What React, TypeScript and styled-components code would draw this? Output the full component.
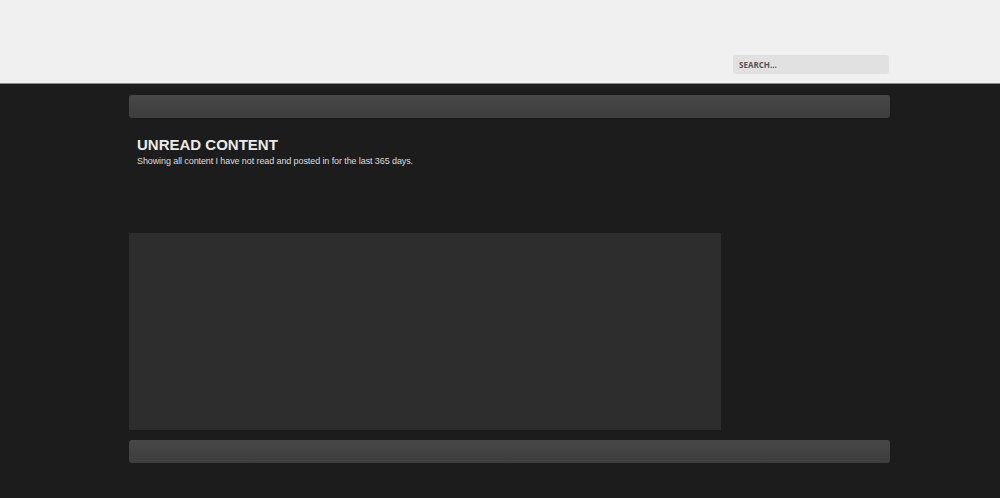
import styled, { createGlobalStyle } from "styled-components";

const GlobalStyle = createGlobalStyle`
  html, body {
    margin: 0;
    padding: 0;
    background: #1c1c1c;
    font-family: "Liberation Sans", Arial, sans-serif;
  }
`;

export default function App() {
  return (
    <>
      <GlobalStyle />
      <Header>
        <HeaderInner>
          <SearchBox placeholder="SEARCH..." />
        </HeaderInner>
      </Header>
      <Main>
        <NavBar />
        <PageTitle>
          <h1>UNREAD CONTENT</h1>
          <p>Showing all content I have not read and posted in for the last 365 days.</p>
        </PageTitle>
        <ContentBox />
        <NavBar $bottom />
      </Main>
    </>
  );
}

const Header = styled.header`
  height: 84px;
  background: #f0f0f0;
  border-bottom: 1px solid #8a8a8a;
  box-sizing: border-box;
`;

const HeaderInner = styled.div`
  width: 761px;
  margin-left: 129px;
  height: 100%;
  display: flex;
  justify-content: flex-end;
  align-items: flex-start;
  padding-top: 55px;
  box-sizing: border-box;
`;

const SearchBox = styled.input`
  width: 156px;
  height: 19px;
  margin-right: 1px;
  border: none;
  border-radius: 3px;
  background: #e1e1e1;
  padding: 0 6px;
  box-sizing: border-box;
  font-family: "Open Sans", sans-serif;
  font-size: 8px;
  font-weight: 700;
  outline: none;

  &::placeholder {
    color: #555;
  }
`;

const Main = styled.main`
  width: 761px;
  margin-left: 129px;
  padding-top: 11px;
  padding-bottom: 35px;
`;

const NavBar = styled.div<{ $bottom?: boolean }>`
  height: 23px;
  border-radius: 3px;
  background: linear-gradient(#474747, #3d3d3d);
  margin-top: ${(p) => (p.$bottom ? "10px" : "0")};
`;

const PageTitle = styled.div`
  padding: 19px 8px 0;
  height: 115px;
  box-sizing: border-box;

  h1 {
    margin: 0;
    font-size: 15px;
    line-height: 16px;
    font-weight: 700;
    color: #ebebeb;
  }

  p {
    margin: 3px 0 0;
    font-size: 9px;
    line-height: 11px;
    letter-spacing: -0.1px;
    color: #dcdcdc;
  }
`;

const ContentBox = styled.div`
  width: 592px;
  height: 197px;
  background: #2d2d2d;
`;
